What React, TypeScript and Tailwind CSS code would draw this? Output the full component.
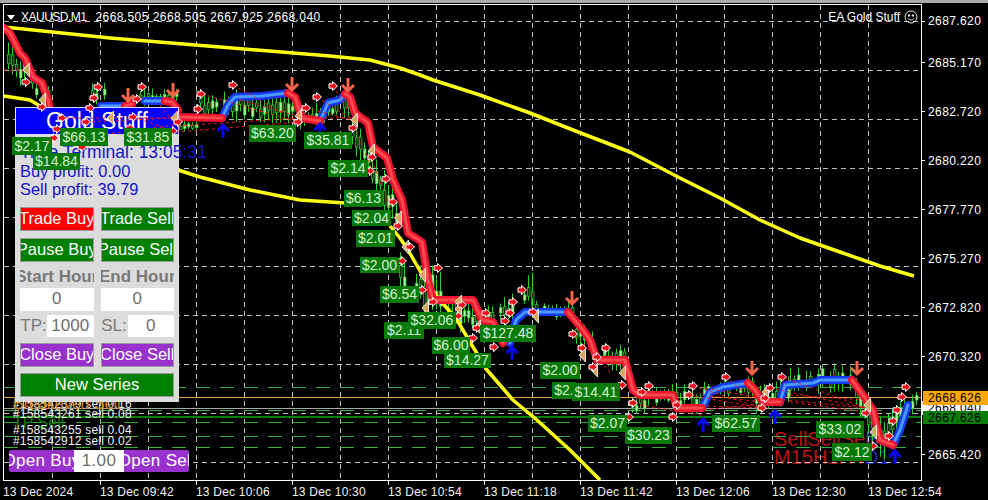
const gridX = Array.from({ length: 18 }, (_, i) => 52 + i * 48)
const gridY = [21, 70, 119, 168, 217, 266, 315, 364, 413, 462]

const prices = ['2687.620', '2685.170', '2682.720', '2680.220', '2677.770', '2675.270', '2672.820', '2670.320', '', '2665.420']
const times = ['13 Dec 09:42', '13 Dec 10:06', '13 Dec 10:30', '13 Dec 10:54', '13 Dec 11:18', '13 Dec 11:42', '13 Dec 12:06', '13 Dec 12:30', '13 Dec 12:54']

const upperMa = '4,27 110,38 220,47 330,56 370,60 400,68 420,75 433,80 480,95 530,113 573,130 630,152 680,178 720,198 760,220 800,238 840,252 880,266 914,276'
const lowerMa = [
  '4,96 30,100 50,112',
  '178,170 200,177 250,190 300,200 345,203',
  '390,226 400,238 408,250 427,283 440,300 457,320 470,342 487,370 513,400 537,420 570,450 600,480',
]

const redLines = [
  '4,28 10,33 20,53 25,58 33,77 42,83 48,100 50,110',
  '125,106 132,104',
  '165,101 172,102 178,110',
  '178,117 222,118',
  '288,93 295,97 302,118 320,121',
  '345,94 350,97 355,113 368,123 373,147 387,158 393,180 402,200 408,233 422,242 428,280 433,300 473,300 482,320 493,322 503,343',
  '568,312 583,330 590,340 597,360 625,360 633,390 640,395 673,395 677,408 702,408',
  '748,383 755,390 763,402 780,402',
  '852,380 863,395 873,410 880,440 893,445',
]
const blueLines = [
  '101,106 125,106',
  '145,101 165,101',
  '222,118 228,105 235,97 262,96 288,93',
  '320,121 328,103 340,100 345,94',
  '510,343 516,320 525,312 568,312',
  '702,408 710,392 723,387 748,383',
  '780,402 785,385 813,383 820,380 852,380',
  '893,445 900,430 908,405',
]

// x0, x1, top at x0, bottom at x0, top at x1, bottom at x1
const clusters = [
  [8, 48, 38, 75, 85, 112],
  [92, 104, 78, 106, 78, 106],
  [140, 176, 88, 106, 88, 106],
  [180, 196, 120, 132, 120, 132],
  [200, 292, 84, 120, 90, 128],
  [300, 348, 110, 132, 86, 122],
  [352, 396, 108, 150, 190, 240],
  [400, 444, 250, 300, 268, 335],
  [444, 492, 292, 330, 300, 338],
  [496, 532, 300, 330, 272, 312],
  [532, 572, 298, 318, 300, 322],
  [576, 600, 315, 345, 335, 372],
  [600, 624, 342, 370, 345, 372],
  [628, 648, 395, 422, 385, 412],
  [648, 700, 384, 405, 382, 418],
  [704, 752, 376, 400, 374, 398],
  [756, 788, 385, 418, 376, 410],
  [790, 852, 366, 396, 362, 392],
  [856, 884, 372, 410, 420, 468],
  [888, 916, 410, 445, 382, 412],
]

const noise = (n: number) => {
  const s = Math.sin(n * 12.9898) * 43758.5453
  return s - Math.floor(s)
}

const candles = clusters.flatMap(([x0, x1, t0, b0, t1, b1]) => {
  const out: { x: number; top: number; bottom: number; bodyTop: number; bodyH: number; solid: boolean }[] = []
  for (let x = x0; x <= x1; x += 4) {
    if (noise(x + 23) < 0.12) continue
    const k = x1 === x0 ? 0 : (x - x0) / (x1 - x0)
    const t = t0 + (t1 - t0) * k
    const b = b0 + (b1 - b0) * k
    const h = b - t
    const top = t + noise(x) * h * 0.35
    const bottom = b - noise(x + 7) * h * 0.35
    const bodyTop = top + (bottom - top) * (0.2 + noise(x + 3) * 0.3)
    const bodyH = Math.max(3, (bottom - top) * 0.35)
    out.push({ x, top, bottom, bodyTop, bodyH, solid: noise(x + 11) > 0.45 })
  }
  return out
})

const dashedRed = [
  [60, 118, 174, 118], [86, 122, 174, 118], [133, 117, 174, 131], [100, 135, 174, 125], [160, 105, 180, 130],
  [176, 132, 300, 122], [202, 94, 298, 122], [233, 85, 298, 122], [178, 126, 298, 118], [240, 100, 298, 116],
  [306, 108, 360, 122], [317, 97, 354, 120], [333, 86, 354, 120], [300, 118, 372, 118],
  [352, 120, 372, 170], [372, 160, 398, 228],
  [428, 285, 462, 310], [575, 335, 610, 372], [606, 350, 622, 370],
  [640, 405, 702, 415], [677, 405, 762, 408], [689, 395, 762, 408], [693, 386, 762, 408], [726, 377, 762, 408],
  [705, 388, 762, 398], [710, 396, 762, 402], [680, 412, 762, 404],
  [765, 398, 866, 408], [770, 388, 866, 408], [782, 377, 866, 408], [790, 395, 866, 400], [790, 402, 866, 412],
  [4, 70, 24, 70],
]

const markers = [
  [26, 82], [42, 107], [98, 87], [94, 98], [90, 108], [86, 122], [62, 118], [57, 129], [54, 138], [82, 147],
  [142, 87], [137, 99], [133, 117], [130, 128], [173, 131], [178, 122], [201, 94], [198, 109], [233, 85],
  [298, 122], [306, 108], [317, 97], [333, 86], [353, 128], [372, 157], [370, 171], [386, 179], [393, 202],
  [398, 226], [410, 247], [402, 261], [438, 268], [422, 290], [433, 302], [458, 316], [462, 305], [486, 313],
  [477, 328], [473, 338], [494, 347], [505, 321], [510, 313], [513, 302], [522, 290], [533, 312], [573, 334],
  [582, 348], [597, 357], [593, 367], [606, 348], [622, 385], [642, 392], [649, 386], [633, 403], [629, 417],
  [673, 417], [677, 405], [689, 395], [693, 386], [726, 377], [762, 408], [765, 398], [770, 388], [782, 377],
  [866, 413], [873, 446], [889, 436], [893, 421], [897, 410], [902, 397], [906, 387],
]

const closes = [
  [26, 70], [42, 100], [110, 118], [174, 118], [298, 116], [354, 120], [371, 151], [398, 218], [405, 247],
  [422, 275], [425, 308], [458, 302], [458, 309], [477, 327], [535, 316], [582, 355], [594, 370], [622, 373],
  [867, 405], [873, 432], [765, 392],
]

const downArrows = [[128, 95], [173, 90], [292, 84], [348, 85], [572, 298], [752, 368], [857, 368]]
const upArrows = [[223, 131], [320, 130], [512, 353], [703, 425], [775, 417], [895, 457]]

const labels: [string, number, number, number, number][] = [
  ['$2.11', 384, 322, 40, 17],
  ['$6.00', 432, 337, 38, 17],
  ['$2.', 552, 382, 24, 17],
  ['$66.13', 60, 128, 48, 18],
  ['$31.85', 124, 128, 48, 18],
  ['$2.17', 12, 137, 40, 18],
  ['$14.84', 33, 153, 47, 17],
  ['$63.20', 249, 125, 47, 17],
  ['$35.81', 304, 132, 48, 17],
  ['$2.14', 328, 160, 40, 17],
  ['$6.13', 344, 190, 39, 17],
  ['$2.04', 352, 210, 39, 16],
  ['$2.01', 356, 230, 39, 17],
  ['$2.00', 360, 257, 39, 16],
  ['$6.54', 380, 286, 39, 17],
  ['$32.06', 408, 312, 48, 17],
  ['$127.48', 480, 325, 56, 17],
  ['$14.27', 444, 353, 47, 15],
  ['$2.00', 540, 362, 40, 17],
  ['$14.41', 572, 383, 48, 18],
  ['$2.07', 588, 415, 39, 17],
  ['$30.23', 625, 427, 47, 17],
  ['$62.57', 712, 415, 48, 17],
  ['$33.02', 816, 421, 48, 17],
  ['$2.12', 832, 443, 40, 18],
]

const tradeLines = [
  { text: '#158542379 sell 0.16', cls: 'top-[392px]' },
  { text: '#158543261 sell 0.08', cls: 'top-[402px]' },
  { text: '#158543255 sell 0.04', cls: 'top-[418px]' },
  { text: '#158542912 sell 0.02', cls: 'top-[429px]' },
]

function PanelButton({ text, color }: { text: string; color: string }) {
  return (
    <div className={`flex h-[24px] items-center justify-center overflow-hidden whitespace-nowrap border border-[#9a9a9a] text-[16.5px] text-white ${color}`}>
      {text}
    </div>
  )
}

function BaseChart() {
  return (
    <svg className="absolute inset-0" width={917} height={475} viewBox="4 5 917 475">
      {gridY.map((y) => (
        <line key={y} x1={4} x2={921} y1={y + 0.5} y2={y + 0.5} stroke="#c0c0c0" strokeDasharray="5 4" />
      ))}
      {gridX.map((x) => (
        <line key={x} x1={x + 0.5} x2={x + 0.5} y1={5} y2={480} stroke="#c0c0c0" strokeDasharray="5 4" />
      ))}
      {[387, 410, 422, 436, 447].map((y) => (
        <line key={y} x1={4} x2={921} y1={y + 0.5} y2={y + 0.5} stroke="#35b035" strokeDasharray="14 10" />
      ))}
      <line x1={4} x2={921} y1={397.5} y2={397.5} stroke="#e8a040" />
      <line x1={4} x2={921} y1={408.5} y2={408.5} stroke="#a8a8a8" />
      <line x1={4} x2={921} y1={417} y2={417} stroke="#0a7d0a" strokeWidth={2} />
      {candles.map((c, i) => (
        <g key={i}>
          <line x1={c.x + 0.5} x2={c.x + 0.5} y1={c.top} y2={c.bottom} stroke="#2bd02b" />
          <rect x={c.x - 0.5} y={c.bodyTop} width={2.5} height={c.bodyH} fill={c.solid ? '#a8f5a0' : '#0a2a0a'} stroke="#35cf35" strokeWidth={0.7} />
        </g>
      ))}
      <polyline points={upperMa} fill="none" stroke="#ffff14" strokeWidth={3.5} strokeLinejoin="round" />
      {lowerMa.map((p) => (
        <polyline key={p} points={p} fill="none" stroke="#ffff14" strokeWidth={3.5} strokeLinejoin="round" />
      ))}
      {blueLines.map((p) => (
        <g key={p} fill="none" strokeLinejoin="round" strokeLinecap="round">
          <polyline points={p} stroke="#1238f0" strokeWidth={8} />
          <polyline points={p} stroke="#4a9aff" strokeWidth={3} />
        </g>
      ))}
      {redLines.map((p) => (
        <g key={p} fill="none" strokeLinejoin="round" strokeLinecap="round">
          <polyline points={p} stroke="#ec1230" strokeWidth={8} />
          <polyline points={p} stroke="#fb4a4c" strokeWidth={3} />
        </g>
      ))}
    </svg>
  )
}

function OverlayChart() {
  return (
    <svg className="absolute inset-0" width={917} height={475} viewBox="4 5 917 475">
      {dashedRed.map(([x1, y1, x2, y2], i) => (
        <line key={i} x1={x1} y1={y1} x2={x2} y2={y2} stroke="#f01818" strokeDasharray="3 3" />
      ))}
      {closes.map(([x, y], i) => (
        <path key={i} transform={`translate(${x} ${y})`} d="M3.5 -7L-3 0L3.5 7Z" fill="#d8a860" stroke="#fff" strokeWidth={0.8} />
      ))}
      {markers.map(([x, y], i) => (
        <path key={i} transform={`translate(${x} ${y})`} d="M-4 -2.2H-0.5V-4.5L4.5 0L-0.5 4.5V2.2H-4Z" fill="#ee0c18" stroke="#fff" strokeWidth={1} strokeLinejoin="round" />
      ))}
      {downArrows.map(([x, y], i) => (
        <path key={i} transform={`translate(${x} ${y})`} d="M0 -7V6M-6 0L0 6L6 0" fill="none" stroke="#f4654a" strokeWidth={3} />
      ))}
      {upArrows.map(([x, y], i) => (
        <path key={i} transform={`translate(${x} ${y})`} d="M0 7V-6M-5.5 0L0 -6L5.5 0" fill="none" stroke="#0808f0" strokeWidth={3} />
      ))}
    </svg>
  )
}

export default function App() {
  return (
    <div className="flex h-[500px] w-[988px] flex-col overflow-hidden bg-black font-['Liberation_Sans',Arial,sans-serif] text-[12px] text-white">
      <div className="h-[3px] bg-[#ababab]" />
      <div className="mt-[1px] flex">
        {/* Chart */}
        <div className="relative ml-[3px] h-[477px] w-[919px] border border-white">
          {/* Signal text sits under the chart lines */}
          <div className="absolute left-[770px] top-[425px] whitespace-nowrap text-[20px] leading-[18px] text-[#b81414]">
            <div>
              SellSellSell<span className="ml-[-8px] text-[#1c28b0]">Buy</span>
            </div>
            <div>
              M15H1H4<span className="text-[#1c28b0]">D1</span>
            </div>
          </div>

          <BaseChart />

          {/* Top bar text */}
          <div className="absolute left-[3px] top-[3px] flex items-center">
            <div className="h-0 w-0 border-x-[4.5px] border-t-[5px] border-x-transparent border-t-white" />
            <span className="ml-[6px] tracking-[-0.5px]">XAUUSD,M1</span>
            <span className="ml-[9px] flex gap-[4px] tracking-[0.4px]">
              <span>2668.505</span>
              <span>2668.505</span>
              <span>2667.925</span>
              <span>2668.040</span>
            </span>
          </div>
          <div className="absolute right-[3px] top-[3px] flex items-center gap-[4px]">
            <span>EA Gold Stuff</span>
            <svg width="14" height="14" viewBox="0 0 14 14" fill="none" stroke="#e8e8e8">
              <circle cx="7" cy="7" r="6" />
              <circle cx="5" cy="5.5" r="0.8" fill="#e8e8e8" />
              <circle cx="9" cy="5.5" r="0.8" fill="#e8e8e8" />
              <path d="M4 8.5C5 10.5 9 10.5 10 8.5" />
            </svg>
          </div>

          {/* Order comments */}
          <div className="absolute left-[9px] top-[410px] whitespace-nowrap text-[16px] leading-[16px] text-[#0a7d0a]">TP Sell</div>
          {tradeLines.map((t) => (
            <div key={t.text} className={`absolute left-[9px] whitespace-nowrap leading-[14px] tracking-[0.2px] text-[#f0f0f0] ${t.cls}`}>
              {t.text}
            </div>
          ))}
          <div className="absolute left-[9px] top-[391px] whitespace-nowrap text-[16px] leading-[16px] text-[#d08c1c]">Breakeven Sell</div>

          {/* EA panel */}
          <div className="absolute left-[11px] top-[102px] flex w-[164px] flex-col bg-[#dcdcdc] px-[5px] pb-[5px]">
            <div className="-mx-[5px] flex h-[28px] items-center justify-center border border-[#d8d8ff] bg-[#0000ff] text-[23px] text-white">
              Gold Stuff
            </div>
            <div className="mt-[8px] whitespace-nowrap text-[16.4px] leading-[18.5px] text-[#1414c8]">
              <div className="text-[17.5px]">Time Terminal: 13:05:31</div>
              <div>Buy profit: 0.00</div>
              <div>Sell profit: 39.79</div>
            </div>
            <div className="mt-[8px] grid grid-cols-2 gap-x-[7px] gap-y-[7px]">
              <PanelButton text="Trade Buy" color="bg-[#ff0000]" />
              <PanelButton text="Trade Sell" color="bg-[#008000]" />
              <PanelButton text="Pause Buy" color="bg-[#008000]" />
              <PanelButton text="Pause Sell" color="bg-[#008000]" />
            </div>
            <div className="mt-[4px] grid grid-cols-2 gap-x-[7px] text-[17px] font-bold text-[#7a7a7a]">
              <div className="flex h-[22px] items-center justify-center overflow-hidden whitespace-nowrap">Start Hour</div>
              <div className="flex h-[22px] items-center justify-center overflow-hidden whitespace-nowrap">End Hour</div>
            </div>
            <div className="grid grid-cols-2 gap-x-[7px] text-[17px] text-[#6e6e6e]">
              <div className="flex h-[23px] items-center justify-center bg-white">0</div>
              <div className="flex h-[23px] items-center justify-center bg-white">0</div>
            </div>
            <div className="mt-[4px] grid grid-cols-2 gap-x-[7px] text-[17px] text-[#6e6e6e]">
              <div className="flex h-[22px]">
                <span className="flex w-[27px] items-center justify-center text-[#7a7a7a]">TP:</span>
                <span className="flex flex-1 items-center justify-center bg-white">1000</span>
              </div>
              <div className="flex h-[22px]">
                <span className="flex w-[27px] items-center justify-center text-[#7a7a7a]">SL:</span>
                <span className="flex flex-1 items-center justify-center bg-white">0</span>
              </div>
            </div>
            <div className="mt-[6px] grid grid-cols-2 gap-x-[7px]">
              <PanelButton text="Close Buy" color="bg-[#9932cc]" />
              <PanelButton text="Close Sell" color="bg-[#9932cc]" />
            </div>
            <div className="mt-[6px]">
              <PanelButton text="New Series" color="bg-[#008000]" />
            </div>
          </div>

          {/* Lot size bar */}
          <div className="absolute left-[5px] top-[445px] flex h-[22px] w-[180px] text-[17px] tracking-[0.3px]">
            <div className="flex flex-1 items-center justify-center overflow-hidden whitespace-nowrap rounded-l-[2px] bg-[#9932cc]">Open Buy</div>
            <div className="flex w-[50px] items-center justify-center bg-white text-[#6e6e6e]">1.00</div>
            <div className="flex flex-1 items-center justify-center overflow-hidden whitespace-nowrap rounded-r-[2px] bg-[#9932cc]">Open Sell</div>
          </div>

          <OverlayChart />

          {/* Profit labels */}
          {labels.map(([text, x, y, w, h], i) => (
            <div
              key={i}
              className="absolute flex items-center justify-center whitespace-nowrap bg-[#087a08] text-[14px] text-[#d4f2d4]"
              style={{ left: x - 4, top: y - 5, width: w, height: h }}
            >
              {text}
            </div>
          ))}
        </div>

        {/* Price axis */}
        <div className="relative w-[66px] tracking-[0.4px]">
          {prices.map((p, i) => (
            <div key={i} className={`flex items-center gap-[3px] ${i === 0 ? 'h-[34px]' : 'h-[49px]'}`}>
              <div className="h-px w-[3px] bg-white" />
              <span>{p}</span>
            </div>
          ))}
          <div className="absolute left-0 top-[397px] flex h-[14px] w-full items-center bg-white pl-[6px] text-black">2668.040</div>
          <div className="absolute left-[1px] top-[387px] flex h-[14px] w-full items-center bg-[#ffa500] pl-[5px] text-black">2668.626</div>
          <div className="absolute left-[1px] top-[407px] flex h-[13px] w-full items-center bg-[#0a7d0a] pl-[5px] text-black">2667.626</div>
        </div>
      </div>

      {/* Time axis */}
      <div className="flex tracking-[0.2px] text-[#f4f4f4]">
        <div className="w-[100px] shrink-0 pl-[3px]">
          <div className="h-[4px]" />
          <div className="leading-[14px]">13 Dec 2024</div>
        </div>
        {times.map((t) => (
          <div key={t} className="w-[96px] shrink-0 whitespace-nowrap">
            <div className="h-[4px] w-px bg-white" />
            <div className="leading-[14px]">{t}</div>
          </div>
        ))}
      </div>
    </div>
  )
}
